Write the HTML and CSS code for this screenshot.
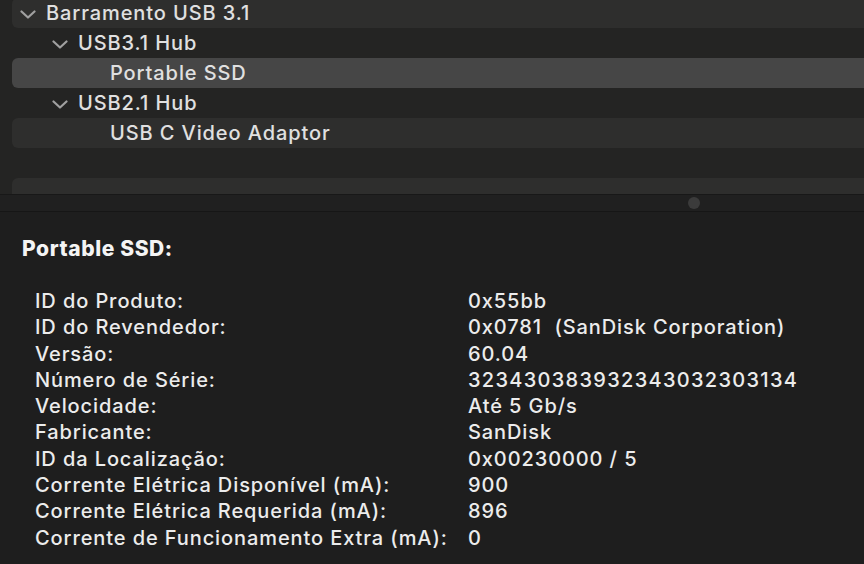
FILE: index.html
```html
<!DOCTYPE html>
<html lang="pt">
<head>
<meta charset="utf-8">
<link rel="stylesheet" href="styles.css">
</head>
<body>
<div class="tree">
  <div class="row light first"><span class="chev"><svg width="16" height="9" viewBox="0 0 16 9"><path d="M1.5 1.5 L8 7.5 L14.5 1.5" fill="none" stroke="#a0a0a0" stroke-width="2.2" stroke-linecap="round" stroke-linejoin="round"/></svg></span><span class="label">Barramento USB 3.1</span></div>
  <div class="row lvl2"><span class="chev"><svg width="16" height="9" viewBox="0 0 16 9"><path d="M1.5 1.5 L8 7.5 L14.5 1.5" fill="none" stroke="#a0a0a0" stroke-width="2.2" stroke-linecap="round" stroke-linejoin="round"/></svg></span><span class="label">USB3.1 Hub</span></div>
  <div class="row selected lvl3"><span class="label">Portable SSD</span></div>
  <div class="row lvl2"><span class="chev"><svg width="16" height="9" viewBox="0 0 16 9"><path d="M1.5 1.5 L8 7.5 L14.5 1.5" fill="none" stroke="#a0a0a0" stroke-width="2.2" stroke-linecap="round" stroke-linejoin="round"/></svg></span><span class="label">USB2.1 Hub</span></div>
  <div class="row light lvl3"><span class="label">USB C Video Adaptor</span></div>
  <div class="row"></div>
  <div class="row light"></div>
</div>
<div class="splitter"><span class="dot"></span></div>
<div class="detail">
  <div class="heading">Portable SSD:</div>
  <div class="props">
    <div class="k">ID do Produto:</div><div class="v">0x55bb</div>
    <div class="k">ID do Revendedor:</div><div class="v">0x0781&nbsp; (SanDisk Corporation)</div>
    <div class="k">Versão:</div><div class="v">60.04</div>
    <div class="k">Número de Série:</div><div class="v serial">323430383932343032303134</div>
    <div class="k">Velocidade:</div><div class="v">Até 5 Gb/s</div>
    <div class="k">Fabricante:</div><div class="v">SanDisk</div>
    <div class="k">ID da Localização:</div><div class="v">0x00230000 / 5</div>
    <div class="k">Corrente Elétrica Disponível (mA):</div><div class="v">900</div>
    <div class="k">Corrente Elétrica Requerida (mA):</div><div class="v">896</div>
    <div class="k">Corrente de Funcionamento Extra (mA):</div><div class="v">0</div>
  </div>
</div>
</body>
</html>
```
FILE: styles.css
```css
html, body {
  margin: 0;
  padding: 0;
  background: #1e1e1e;
  width: 864px;
  height: 564px;
  overflow: hidden;
  font-family: Inter, "Noto Sans", sans-serif;
}
.tree {
  height: 194px;
  background: #242423;
  overflow: hidden;
}
.row {
  height: 30px;
  margin-left: 12px;
  margin-right: -12px;
  border-radius: 6px;
  display: flex;
  align-items: center;
  padding-left: 8px;
  color: #e0e0e0;
  font-size: 20px;
  font-weight: 500;
  letter-spacing: 0.9px;
  box-sizing: border-box;
  white-space: nowrap;
}
.row.first { margin-top: -2px; }
.row.light { background: #2e2e2d; }
.row.selected { background: #464646; }
.row.lvl2 { padding-left: 40px; }
.row.lvl3 { padding-left: 98px; }
.chev {
  width: 26px;
  display: flex;
  align-items: center;
  padding-top: 2px;
}
.splitter {
  height: 18px;
  background: #202020;
  border-top: 1px solid #181818;
  border-bottom: 1px solid #161616;
  box-sizing: border-box;
  display: flex;
  align-items: center;
  padding-left: 688px;
}
.dot {
  width: 12px;
  height: 12px;
  border-radius: 50%;
  background: #3b3b3b;
}
.detail {
  padding: 24px 0 0 22px;
  color: #ececec;
  font-size: 20px;
  font-weight: 500;
  letter-spacing: 0.9px;
  white-space: nowrap;
}
.heading {
  font-weight: 800;
  font-size: 21px;
  letter-spacing: 0.6px;
  color: #f4f4f4;
  height: 26px;
  line-height: 26px;
  margin-bottom: 26px;
}
.props {
  display: grid;
  grid-template-columns: 433px auto;
  padding-left: 13px;
  line-height: 26.3px;
}
.serial { letter-spacing: 1.3px; }
```
